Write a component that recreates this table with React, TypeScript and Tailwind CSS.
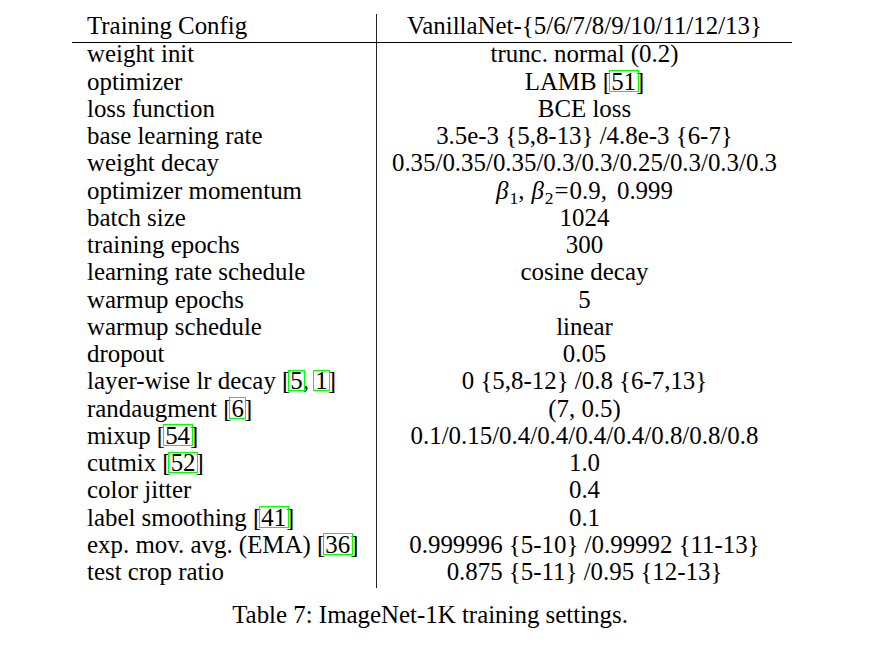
import React from "react";

function Cite({ n }: { n: string }) {
  return (
    <span className="relative">
      {n}
      <span className="absolute left-[-2.5px] right-[-2.5px] top-[2.6px] bottom-[3px] border border-[#00ff00]" />
    </span>
  );
}

const rows: [React.ReactNode, React.ReactNode][] = [
  ["weight init", "trunc. normal (0.2)"],
  [
    "optimizer",
    <>
      LAMB [<Cite n="51" />]
    </>,
  ],
  ["loss function", "BCE loss"],
  ["base learning rate", "3.5e-3 {5,8-13} /4.8e-3 {6-7}"],
  ["weight decay", "0.35/0.35/0.35/0.3/0.3/0.25/0.3/0.3/0.3"],
  [
    "optimizer momentum",
    <>
      <span className="italic">β</span>
      <span className="relative top-[5px] ml-[1px] text-[17.5px]">1</span>
      <span className="mr-[7px]">,</span>
      <span className="italic">β</span>
      <span className="relative top-[5px] ml-[1px] text-[17.5px]">2</span>
      <span className="mx-[1px]">=</span>0.9,<span className="ml-[10px]">0.999</span>
    </>,
  ],
  ["batch size", "1024"],
  ["training epochs", "300"],
  ["learning rate schedule", "cosine decay"],
  ["warmup epochs", "5"],
  ["warmup schedule", "linear"],
  ["dropout", "0.05"],
  [
    <>
      layer-wise lr decay [<Cite n="5" />, <Cite n="1" />]
    </>,
    "0 {5,8-12} /0.8 {6-7,13}",
  ],
  [
    <>
      randaugment [<Cite n="6" />]
    </>,
    "(7, 0.5)",
  ],
  [
    <>
      mixup [<Cite n="54" />]
    </>,
    "0.1/0.15/0.4/0.4/0.4/0.4/0.8/0.8/0.8",
  ],
  [
    <>
      cutmix [<Cite n="52" />]
    </>,
    "1.0",
  ],
  ["color jitter", "0.4"],
  [
    <>
      label smoothing [<Cite n="41" />]
    </>,
    "0.1",
  ],
  [
    <>
      exp. mov. avg. (EMA) [<Cite n="36" />]
    </>,
    "0.999996 {5-10} /0.99992 {11-13}",
  ],
  ["test crop ratio", "0.875 {5-11} /0.95 {12-13}"],
];

export default function App() {
  return (
    <div className="w-[874px] h-[668px] bg-white text-black font-['Liberation_Serif',serif] text-[24.9px] overflow-hidden">
      <div className="ml-[72px] pt-[14.3px] w-[720px]">
        <div className="flex h-[29px] leading-[24.6px] border-b border-black">
          <div className="w-[305px] pl-[15px] border-r border-[#222] whitespace-nowrap">
            Training Config
          </div>
          <div className="flex-1 text-center whitespace-nowrap">
            VanillaNet-{"{"}5/6/7/8/9/10/11/12/13{"}"}
          </div>
        </div>
        {rows.map(([a, b], i) => (
          <div key={i} className="flex h-[27.25px] leading-[21.2px]">
            <div className="w-[305px] pl-[15px] border-r border-[#222] whitespace-nowrap">
              {a}
            </div>
            <div className="flex-1 text-center whitespace-nowrap">{b}</div>
          </div>
        ))}
        <div className="mt-[15.7px] leading-[21.2px] text-center whitespace-nowrap pr-[4px]">
          Table 7: ImageNet-1K training settings.
        </div>
      </div>
    </div>
  );
}
